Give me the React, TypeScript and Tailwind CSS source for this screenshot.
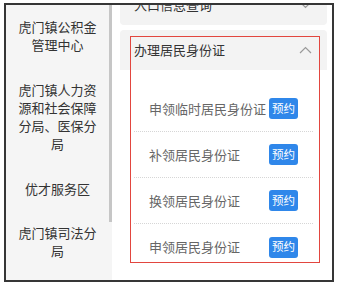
import React from "react";

const menu = [
  "虎门镇公积金管理中心",
  "虎门镇人力资源和社会保障分局、医保分局",
  "优才服务区",
  "虎门镇司法分局",
];

const items = ["申领临时居民身份证", "补领居民身份证", "换领居民身份证", "申领居民身份证"];

function Chevron({ up }: { up?: boolean }) {
  return (
    <svg width="13" height="8" viewBox="0 0 13 8" fill="none" stroke="#9a9a9a" strokeWidth="1.2">
      {up ? <polyline points="1,7 6.5,1.5 12,7" /> : <polyline points="1,1 6.5,6.5 12,1" />}
    </svg>
  );
}

export default function App() {
  return (
    <div
      className="w-[338px] h-[286px] bg-white pt-[3px] pl-[4px]"
      style={{ fontFamily: '"Noto Sans CJK SC", "Noto Sans", sans-serif' }}
    >
      <div className="relative flex w-[330px] h-[279px] overflow-hidden border-2 border-[#363636] bg-white">
        {/* 左侧菜单 */}
        <aside className="w-[103px] shrink-0 bg-[#f5f5f5]">
          {menu.map((m) => (
            <div key={m} className="px-3 py-[13px] text-center text-[13px] leading-[18.3px] text-[#333]">
              {m}
            </div>
          ))}
        </aside>
        <div className="w-[3px] shrink-0 bg-[#f5f5f5]">
          <div className="h-[217px] w-[3px] bg-[#c6c6c6]" />
        </div>

        {/* 右侧内容 */}
        <main className="flex-1 pl-[8px] pr-[5px]">
          <div className="-mt-[20px] flex h-[40px] items-center justify-between rounded-[4px] bg-[#f3f3f3] pl-[14px] pr-[15px] text-[13px] text-[#333]">
            <span>入口信息查询</span>
            <Chevron />
          </div>

          <div className="mt-[5px]">
            <div className="flex h-[40px] items-center justify-between rounded-t-[4px] bg-[#f3f3f3] pl-[14px] pr-[15px] text-[13px] text-[#333]">
              <span>办理居民身份证</span>
              <Chevron up />
            </div>
            <div className="bg-white px-[14px] pt-[16px]">
              {items.map((it, i) => (
                <div
                  key={it}
                  className={
                    "flex h-[46px] items-center justify-between px-[15px] " +
                    (i < items.length - 1 ? "border-b border-dotted border-[#d6d6d6]" : "")
                  }
                >
                  <span className="text-[13px] text-[#666]">{it}</span>
                  <button
                    type="button"
                    className="flex h-[21px] w-[29px] items-center justify-center rounded-[3px] bg-[#2f87ea] text-[11.5px] text-white"
                  >
                    预约
                  </button>
                </div>
              ))}
            </div>
          </div>
        </main>

        {/* 标注框 */}
        <div className="pointer-events-none absolute left-[124px] top-[31px] h-[227px] w-[190px] border-[1.5px] border-[#e2463f]" />
      </div>
    </div>
  );
}
